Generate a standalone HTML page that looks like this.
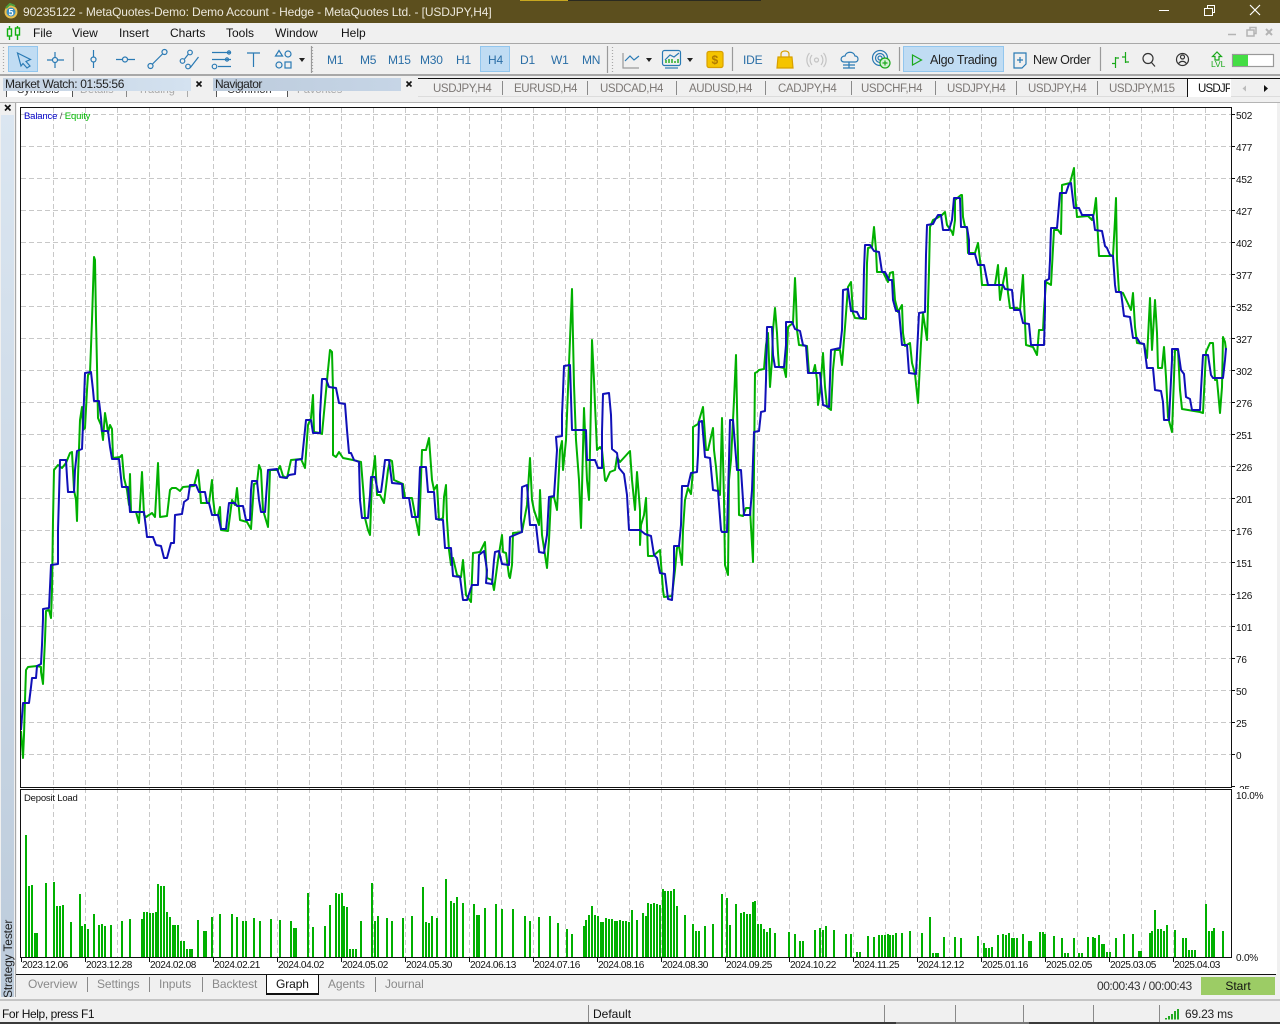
<!DOCTYPE html>
<html><head><meta charset="utf-8"><title>MetaTrader</title>
<style>
html,body{margin:0;padding:0;width:1280px;height:1024px;overflow:hidden;background:#f0f0f0;font-family:"Liberation Sans",sans-serif;}
.a{position:absolute;white-space:nowrap;line-height:14px;}
.m{font-size:12px;color:#111;top:26px;}
.tf{font-size:12px;color:#2a6ea6;top:53px;letter-spacing:-.2px;}
.tb{font-size:11.5px;color:#7d7875;top:82px;letter-spacing:-.38px;}
.s{position:absolute;width:1px;background:#8a8a8a;}
.yl{font-size:10px;color:#111;left:1236px;letter-spacing:-.2px;}
.d{font-size:10px;color:#111;top:959px;letter-spacing:-.42px;}
.bt{font-size:12px;color:#8a8a8a;top:977px;letter-spacing:-.1px;}
.pt{font-size:11px;line-height:12px;color:#aaa;top:84px;}
</style></head><body>
<div style="position:absolute;left:0;top:0;width:1280px;height:23px;background:#5c4f1e"></div>
<div style="position:absolute;left:520px;top:0;width:48px;height:1px;background:#c8a820"></div>
<div style="position:absolute;left:568px;top:0;width:193px;height:1px;background:#2a2a20"></div>
<svg class="a" style="left:3px;top:3px" width="16" height="17"><circle cx="8" cy="9" r="6.5" fill="#e8c050"/><circle cx="8" cy="9" r="4.5" fill="#3f8fc0"/><path d="M3 5L7 1L12 3" stroke="#4ca040" stroke-width="2" fill="none"/><text x="5.5" y="12.5" font-size="9" font-weight="bold" fill="#fff" font-family="Liberation Sans">5</text></svg>
<div class="a" style="left:23px;top:5px;font-size:12px;color:#ece8dc;letter-spacing:-.11px">90235122 - MetaQuotes-Demo: Demo Account - Hedge - MetaQuotes Ltd. - [USDJPY,H4]</div>
<svg class="a" style="left:1150px;top:0" width="130" height="23" fill="none" stroke="#fff"><path d="M9 10.5H19"/><path d="M54.5 8.5H62.5V15.5H54.5ZM57.5 8V5.5H64.5V12.5H62.5"/><path d="M100 5L110 15M110 5L100 15" stroke-width="1.2"/></svg>

<div style="position:absolute;left:0;top:43px;width:1280px;height:1px;background:#a8a8a8"></div>
<svg class="a" style="left:6px;top:25px" width="16" height="16" fill="none" stroke="#10b010" stroke-width="1.4"><path d="M3.5 1V15M11.5 1V15"/><rect x="1.5" y="4" width="4" height="7" fill="#f0f0f0"/><rect x="9.5" y="3" width="4" height="7" fill="#f0f0f0"/></svg>
<div class="a m" style="left:33px">File</div><div class="a m" style="left:72px">View</div><div class="a m" style="left:119px">Insert</div><div class="a m" style="left:170px">Charts</div><div class="a m" style="left:226px">Tools</div><div class="a m" style="left:275px">Window</div><div class="a m" style="left:341px">Help</div>
<svg class="a" style="left:1225px;top:26px" width="55" height="14" fill="none" stroke="#b4b4b4" stroke-width="1.5"><path d="M3 8.5H11"/><path d="M22 4H29V10H22ZM25 3.5V1.5H31V7.5H29"/><path d="M41 3L47 9M47 3L41 9" stroke-width="2"/></svg>

<div style="position:absolute;left:8px;top:46px;width:28px;height:24px;background:#c0dcf3;border:1px solid #92c6ee"></div>
<div style="position:absolute;left:480px;top:46px;width:28px;height:24px;background:#c0dcf3;border:1px solid #92c6ee"></div>
<div style="position:absolute;left:903px;top:46px;width:99px;height:24px;background:#c0dcf3;border:1px solid #92c6ee"></div>
<svg class="a" style="left:0;top:44px" width="1280" height="31" fill="none" stroke="#2a7ab4" stroke-width="1.2">
<g stroke="#a8a8a8" stroke-dasharray="1 2"><path d="M3.5 3V28M312.5 3V28M612.5 3V28"/></g>
<g stroke="#9a9a9a"><path d="M73.5 3V27M311.5 2V29M607.5 2V29M732.5 3V27M899.5 3V27M1100.5 3V27"/></g>
<path d="M17.5 9L30.5 15.5L26 17.5L30 22L27 24L23 19.5L21 22Z"/>
<path d="M47 16H52.5M57.5 16H64M55 8V13.5M55 18.5V24"/><circle cx="55" cy="16" r="2.5"/>
<path d="M93.5 6V13M93.5 18V24"/><circle cx="93.5" cy="15.5" r="2.5"/>
<path d="M116 15.5H122.5M127.5 15.5H135"/><circle cx="125" cy="15.5" r="2.5"/>
<path d="M152.5 20L162.5 10"/><circle cx="150.5" cy="22" r="2.5"/><circle cx="164.5" cy="8" r="2.5"/>
<path d="M184.5 15L188.5 10M190 24L198.5 13"/><circle cx="182.5" cy="17" r="2.3"/><circle cx="190" cy="8.5" r="2.3"/><circle cx="188" cy="22.5" r="2.3"/>
<path d="M212 8.5H231M212 15.5H231M218 22.5H231"/><circle cx="214.5" cy="22.5" r="2.3"/><circle cx="229" cy="8.5" r="1.6"/><circle cx="227" cy="15.5" r="1.6"/>
<path d="M247 9H260M253.5 9V23"/>
<path d="M279 6.5L282.5 12H275.5Z"/><circle cx="288" cy="10" r="3"/><circle cx="279" cy="21" r="3"/><rect x="285" y="18" width="6" height="6"/>
<path d="M299 14H305L302 18Z" fill="#222" stroke="none"/>
<path d="M623 9V24H639" stroke="#9a9a9a"/><path d="M625 17L630 12L634 16L639 12"/>
<path d="M646 14H652L649 18Z" fill="#222" stroke="none"/>
<rect x="662.5" y="6.5" width="18" height="15" rx="2"/><path d="M665 24H678" /><path d="M665 16L670 11L674 13L679 9" stroke="#2a7ab4"/><path d="M666 19V16M669 19V15M672 19V15M675 19V17M678 19V15" stroke="#1aa81a" stroke-width="1.4"/>
<path d="M687 14H693L690 18Z" fill="#222" stroke="none"/>
<rect x="707" y="7.5" width="16" height="16" rx="2" fill="#f5c400" stroke="#d8a000"/>
<path d="M778 13H792L793 24H777Z" fill="#f5c400" stroke="#d8a000"/><path d="M781 13V10C781 6 789 6 789 10V13" stroke="#d8a000"/>
<g stroke="#c4c4c4"><circle cx="816.5" cy="16" r="2"/><path d="M812 11C809.5 14 809.5 18 812 21M821 11C823.5 14 823.5 18 821 21M809.5 9C806 13 806 19 809.5 23M823.5 9C827 13 827 19 823.5 23" /></g>
<path d="M844 18C840 18 840 12 845 12C846 7 854 7 855 12C859 12 859 18 855 18Z"/><path d="M849 18V24M843 24H855M843 21H855"/>
<circle cx="880" cy="14" r="7.5"/><circle cx="880" cy="14" r="4.5"/><circle cx="880" cy="14" r="2"/><circle cx="885" cy="19" r="5" fill="#d4f0d4" stroke="#1aa81a"/><path d="M885 16.5V21.5M882.5 19H887.5" stroke="#1aa81a"/>
<path d="M912.5 11L921.5 16L912.5 21Z" stroke="#1aa81a"/>
<path d="M1014 9H1026V20L1022 24H1014Z" stroke="#2a7ab4"/><path d="M1020 13V19M1017 16H1023"/>
<path d="M1115.5 13V24M1112 19.5H1115.5M1115.5 14H1119M1125.5 8V19M1122 13H1125.5M1125.5 18H1129" stroke="#1aa81a"/>
<circle cx="1148" cy="14.5" r="5" stroke="#333"/><path d="M1151.5 18.5L1155 22.5" stroke="#333"/>
<circle cx="1182.5" cy="15.5" r="6" stroke="#333"/><circle cx="1182.5" cy="13" r="2" stroke="#333"/><path d="M1178.5 20C1180 16.5 1185 16.5 1186.5 20" stroke="#333"/>
<path d="M1212.5 12.5L1217 8L1221.5 12.5H1219V16H1215V12.5Z" stroke="#1aa81a"/>
<rect x="1232.5" y="10.5" width="41" height="12" fill="#fff" stroke="#999"/><rect x="1233" y="11" width="15" height="11" fill="#44dd44" stroke="none"/>
</svg>
<div class="a tf" style="left:327px">M1</div><div class="a tf" style="left:360px">M5</div><div class="a tf" style="left:388px">M15</div><div class="a tf" style="left:420px">M30</div><div class="a tf" style="left:456px">H1</div><div class="a tf" style="left:488px">H4</div><div class="a tf" style="left:520px">D1</div><div class="a tf" style="left:551px">W1</div><div class="a tf" style="left:582px">MN</div>
<div class="a tf" style="left:743px">IDE</div>
<div class="a" style="left:711.5px;top:53px;font-size:12px;font-weight:bold;color:#b07a00">$</div>
<div class="a" style="left:930px;top:53px;font-size:12.5px;color:#222;letter-spacing:-.27px">Algo Trading</div>
<div class="a" style="left:1033px;top:53px;font-size:12.5px;color:#222;letter-spacing:-.35px">New Order</div>
<div class="a" style="left:1211px;top:60px;font-size:8.5px;line-height:9px;color:#1aa81a;letter-spacing:-.1px">LVL</div>
<div style="position:absolute;left:0;top:74px;width:1280px;height:2px;background:#a8a8a8"></div>

<div style="position:absolute;left:6px;top:91px;width:65px;height:7px;background:#fff;border-right:1px solid #555;border-left:1px solid #555"></div>
<div style="position:absolute;left:126px;top:91px;width:1px;height:6px;background:#888"></div>
<div style="position:absolute;left:187px;top:91px;width:1px;height:6px;background:#aaa"></div>
<div style="position:absolute;left:216px;top:91px;width:70px;height:7px;background:#fff;border-right:1px solid #555;border-left:1px solid #555"></div>
<div class="a pt" style="left:17px;color:#333">Symbols</div><div class="a pt" style="left:80px">Details</div><div class="a pt" style="left:138px">Trading</div>
<div class="a pt" style="left:227px;color:#333">Common</div><div class="a pt" style="left:297px">Favorites</div>
<div style="position:absolute;left:3px;top:78px;width:188px;height:13px;background:linear-gradient(90deg,#c4d2e2,#d4e2f0)"></div>
<div style="position:absolute;left:213px;top:78px;width:188px;height:13px;background:linear-gradient(90deg,#bccbdc,#c6d5e6)"></div>
<div class="a" style="left:5px;top:77px;font-size:12px;color:#222;letter-spacing:-.36px">Market Watch: 01:55:56</div>
<div class="a" style="left:215px;top:77px;font-size:12px;color:#222;letter-spacing:-.5px">Navigator</div>
<svg class="a" style="left:195px;top:80px" width="220" height="8" stroke="#111" stroke-width="1.6"><path d="M1.5 1.5L6.5 6.5M6.5 1.5L1.5 6.5M211.5 1.5L216.5 6.5M216.5 1.5L211.5 6.5"/></svg>
<div style="position:absolute;left:418px;top:96px;width:862px;height:1px;background:#dcdcdc"></div>
<div style="position:absolute;left:418px;top:78px;width:862px;height:1px;background:#111"></div>
<div class="a tb" style="left:433px">USDJPY,H4</div><div class="a tb" style="left:514px">EURUSD,H4</div><div class="a tb" style="left:600px">USDCAD,H4</div><div class="a tb" style="left:689px">AUDUSD,H4</div><div class="a tb" style="left:778px">CADJPY,H4</div><div class="a tb" style="left:861px">USDCHF,H4</div><div class="a tb" style="left:947px">USDJPY,H4</div><div class="a tb" style="left:1028px">USDJPY,H4</div><div class="a tb" style="left:1109px">USDJPY,M15</div>
<div class="s" style="left:502px;top:81px;height:14px"></div><div class="s" style="left:587px;top:81px;height:14px"></div><div class="s" style="left:676px;top:81px;height:14px"></div><div class="s" style="left:765px;top:81px;height:14px"></div><div class="s" style="left:851px;top:81px;height:14px"></div><div class="s" style="left:935px;top:81px;height:14px"></div><div class="s" style="left:1016px;top:81px;height:14px"></div><div class="s" style="left:1097px;top:81px;height:14px"></div>
<div style="position:absolute;left:1187px;top:78px;width:43px;height:18px;background:#fff;border-left:1px solid #111;border-top:1px solid #111;border-bottom:1px solid #111"></div>
<div class="a tb" style="left:1198px;color:#111;width:32px;overflow:hidden;letter-spacing:-.8px">USDJPY,H4</div>
<svg class="a" style="left:1240px;top:84px" width="30" height="9"><path d="M6 1.5V7.5L2.5 4.5Z" fill="#bbb"/><path d="M24 1V8L28 4.5Z" fill="#111"/></svg>

<div style="position:absolute;left:0;top:97px;width:1280px;height:5px;background:#f0f0f0"></div>
<div style="position:absolute;left:0;top:102px;width:1280px;height:1px;background:#b4b4b4"></div>
<div style="position:absolute;left:0;top:103px;width:1280px;height:871px;background:#f0f0f0"></div>
<div style="position:absolute;left:17px;top:103px;width:1260px;height:871px;background:#fff"></div>
<div style="position:absolute;left:1px;top:115px;width:13px;height:882px;background:linear-gradient(180deg,#dbe6f1,#bccbdb)"></div>
<div style="position:absolute;left:15px;top:103px;width:1px;height:894px;background:#a8a8a8"></div>
<svg class="a" style="left:4px;top:104px" width="8" height="8" stroke="#111" stroke-width="1.6"><path d="M1 1L6.5 6.5M6.5 1L1 6.5"/></svg>
<div class="a" style="left:-31px;top:952px;width:78px;font-size:12px;color:#222;transform:rotate(-90deg);letter-spacing:-.15px;text-align:left">Strategy Tester</div>

<svg class="a" style="left:0;top:0" width="1280" height="1024" fill="none">
<g stroke="#c8c8c8" stroke-dasharray="5 3" shape-rendering="crispEdges">
<path d="M21 114.5H1231M21 146.5H1231M21 178.5H1231M21 210.5H1231M21 242.5H1231M21 274.5H1231M21 306.5H1231M21 338.5H1231M21 370.5H1231M21 402.5H1231M21 434.5H1231M21 466.5H1231M21 498.5H1231M21 530.5H1231M21 562.5H1231M21 594.5H1231M21 626.5H1231M21 658.5H1231M21 690.5H1231M21 722.5H1231M21 754.5H1231"/>
<path d="M53.5 108V957M85.5 108V957M117.5 108V957M149.5 108V957M181.5 108V957M213.5 108V957M245.5 108V957M277.5 108V957M309.5 108V957M341.5 108V957M373.5 108V957M405.5 108V957M437.5 108V957M469.5 108V957M501.5 108V957M533.5 108V957M565.5 108V957M597.5 108V957M629.5 108V957M661.5 108V957M693.5 108V957M725.5 108V957M757.5 108V957M789.5 108V957M821.5 108V957M853.5 108V957M885.5 108V957M917.5 108V957M949.5 108V957M981.5 108V957M1013.5 108V957M1045.5 108V957M1077.5 108V957M1109.5 108V957M1141.5 108V957M1173.5 108V957M1205.5 108V957"/>
</g>
<path stroke="#00b000" stroke-width="2" stroke-linejoin="round" d="M21 731L23 758L24 735L25 700L26 670L28 667L37 666L41 667L41 672L43 684L44 661L45 640L46 611L49 610L51 618L52 590L53 520L54 470L58 465L62 468L66 463L70 453L72 452L74 490L76 500L77 521L78 477L80 420L82 407L83 430L85 428L87 390L88 375L90 373L92 320L94 257L95 260L96 320L97 366L98 418L101 425L103 440L105 413L107 425L108 433L110 425L112 429L113 458L120 457L122 455L124 478L127 490L129 505L130 474L131 512L136 512L139 523L142 472L144 515L146 517L152 513L155 517L158 463L160 517L167 516L170 490L172 488L176 488L180 491L183 487L194 486L198 470L200 490L201 503L209 503L212 480L213 498L215 515L218 515L220 507L221 530L228 531L232 500L235 505L237 488L240 520L247 522L251 529L254 484L257 483L259 465L261 470L263 510L268 527L270 470L278 470L280 466L283 476L287 478L291 460L301 459L305 468L308 425L311 418L313 395L314 432L320 433L322 434L328 370L330 350L332 352L333 390L333 420L333 455L336 457L339 452L343 458L353 460L361 462L364 500L365 518L368 530L370 535L372 480L374 465L375 456L377 495L380 495L384 503L388 470L390 460L392 461L394 480L403 484L405 498L412 498L416 520L419 535L422 450L426 450L429 438L432 480L434 490L437 485L439 520L443 518L444 497L446 485L447 520L449 550L451 565L453 558L457 575L461 577L463 560L466 595L471 602L473 553L480 552L485 542L487 578L492 580L494 590L498 560L502 535L503 552L506 553L509 576L510 578L512 565L513 533L522 532L527 505L530 458L532 500L534 510L539 525L540 490L542 535L547 568L549 540L551 497L554 497L557 510L560 450L562 441L563 470L566 440L572 289L574 385L576 440L579 480L581 528L584 408L587 480L589 500L591 400L592 340L594 380L595 405L597 450L600 447L602 450L605 480L606 481L610 472L615 470L617 457L620 462L630 451L632 480L635 510L637 472L640 510L640 545L641 525L644 515L646 498L647 526L648 556L653 556L660 550L663 590L664 597L672 596L675 570L677 548L679 546L682 565L683 530L685 500L688 488L691 494L693 470L693 427L698 424L703 407L706 450L708 450L713 428L714 450L716 467L718 490L720 495L722 418L724 500L725 565L728 575L729 480L731 460L734 400L736 355L737 407L738 453L739 515L743 516L746 508L750 508L751 527L753 562L754 470L755 373L757 372L759 370L764 369L766 345L768 333L770 387L772 360L773 330L775 308L777 333L778 353L779 367L784 368L786 377L788 327L793 323L795 278L796 300L797 330L799 345L807 346L809 373L813 373L815 365L817 380L818 405L820 392L823 353L825 387L827 407L831 410L833 370L835 350L840 350L842 365L845 327L848 287L851 282L853 313L855 318L866 319L867 263L868 248L872 247L874 227L876 250L877 272L883 272L888 282L890 273L893 272L895 300L898 312L902 305L903 333L905 346L910 343L912 363L915 374L918 403L921 343L923 313L924 320L927 340L929 270L930 227L933 220L937 218L942 215L945 212L947 225L952 232L953 235L955 220L955 200L961 195L962 195L963 217L965 227L967 228L968 253L975 253L978 243L980 260L982 285L995 285L998 265L1000 300L1003 283L1006 268L1008 293L1010 308L1017 308L1020 310L1023 275L1024 300L1026 345L1033 347L1037 355L1039 330L1043 330L1044 310L1046 282L1051 285L1054 230L1058 230L1061 234L1062 185L1070 183L1074 168L1075 193L1077 217L1088 216L1092 220L1094 213L1096 198L1098 237L1099 256L1113 256L1115 220L1116 198L1117 260L1119 292L1123 293L1131 310L1133 293L1135 327L1137 343L1144 344L1147 358L1150 298L1152 350L1155 300L1157 333L1158 368L1162 368L1164 347L1166 377L1168 417L1172 432L1175 350L1178 350L1180 390L1182 409L1200 412L1203 413L1206 352L1210 343L1213 343L1215 380L1217 380L1220 413L1222 387L1223 337L1225 342L1226 350"/>
<path stroke="#1010b8" stroke-width="2" stroke-linejoin="round" d="M21 730L23 703L29 703L31 687L32 678L36 678L37 666L41 664L42 645L43 619L43 609L49 608L50 587L51 565L58 564L58 530L59 496L60 460L66 460L67 477L68 492L74 492L75 470L77 451L82 449L84 400L85 373L91 372L93 390L94 401L99 401L101 418L102 431L108 431L110 447L112 459L119 459L121 478L122 487L128 487L130 512L144 512L146 528L147 537L153 537L156 545L161 546L164 558L167 558L171 543L174 543L175 515L182 514L184 502L188 499L190 485L196 485L199 492L205 492L207 503L209 503L212 515L218 515L221 529L226 529L229 503L235 503L237 506L243 506L246 520L250 520L251 490L252 481L257 481L259 500L261 512L265 512L268 470L277 469L280 477L286 478L289 475L295 474L296 460L302 459L305 430L306 420L311 420L313 433L320 433L320 415L322 379L326 379L329 387L336 388L339 403L345 404L347 430L349 453L351 453L354 460L359 462L360 500L362 518L368 518L370 495L371 477L375 477L378 492L381 492L383 477L385 460L389 460L392 483L402 484L403 498L409 498L412 517L418 517L420 467L426 467L428 492L434 492L436 519L443 520L445 548L451 548L453 576L460 577L463 600L467 600L472 585L478 585L479 555L484 551L487 570L486 583L492 584L494 560L495 552L499 551L502 564L509 565L510 537L522 532L521 518L522 487L527 485L530 525L536 525L539 552L544 553L547 535L549 497L554 496L557 450L556 437L562 436L562 415L563 392L564 366L570 365L572 430L586 430L587 460L595 460L598 468L602 468L602 432L603 394L609 393L611 415L612 449L617 453L619 468L624 474L627 495L629 530L640 530L645 534L651 536L654 555L657 558L660 573L665 574L668 599L672 600L674 570L674 546L679 546L681 525L682 486L688 486L691 473L697 472L698 455L699 422L702 421L705 457L710 458L713 490L718 491L721 530L722 532L727 532L729 460L730 420L733 420L737 470L741 470L743 500L744 515L750 515L752 490L754 432L759 431L761 412L765 411L766 380L767 327L772 327L773 355L775 367L784 367L786 345L786 322L792 322L795 329L800 331L803 345L806 346L808 373L820 373L823 405L829 407L831 350L840 348L842 330L843 290L848 289L851 311L857 312L860 318L863 318L864 270L865 245L870 245L874 251L879 252L882 272L885 272L889 280L892 280L893 300L896 311L899 311L902 345L907 345L909 373L916 374L919 313L925 312L926 255L927 225L933 224L935 220L938 215L941 215L943 230L949 230L952 220L954 198L960 198L961 227L967 227L969 240L969 254L975 254L978 265L984 265L988 285L1003 285L1005 289L1012 290L1014 310L1020 310L1023 323L1029 324L1031 345L1044 345L1045 310L1045 281L1049 279L1050 260L1051 228L1057 228L1060 193L1066 193L1069 184L1071 183L1073 200L1074 208L1079 208L1082 215L1093 215L1095 230L1102 231L1105 246L1107 248L1110 255L1113 256L1115 285L1116 292L1121 292L1124 316L1130 317L1133 338L1137 338L1140 343L1144 344L1146 360L1147 368L1153 368L1155 390L1161 391L1163 402L1164 420L1169 420L1172 360L1172 349L1178 349L1181 370L1184 374L1186 397L1190 399L1192 410L1200 410L1201 390L1203 355L1208 355L1211 375L1213 378L1223 378L1225 360L1226 348"/>
<path stroke="#00b000" stroke-width="2" shape-rendering="crispEdges" d="M26 835V957M29 886V957M32 885V957M35 933V957M37 933V957M46 883V957M54 882V957M57 906V957M60 906V957M63 905V957M71 922V957M80 894V957M82 926V957M85 924V957M88 929V957M94 914V957M99 925V957M102 924V957M105 926V957M111 925V957M122 921V957M130 919V957M142 919V957M144 912V957M147 912V957M150 913V957M153 913V957M156 912V957M158 884V957M161 886V957M164 886V957M167 912V957M170 917V957M173 925V957M175 925V957M178 925V957M181 941V957M184 941V957M187 949V957M190 949V957M192 949V957M198 920V957M204 931V957M206 931V957M212 917V957M220 914V957M232 914V957M237 917V957M243 921V957M246 921V957M254 918V957M260 921V957M271 919V957M280 920V957M291 921V957M294 928V957M296 928V957M308 893V957M313 927V957M325 926V957M330 905V957M336 893V957M339 894V957M342 893V957M344 906V957M347 907V957M350 949V957M353 949V957M356 949V957M361 921V957M372 883V957M375 921V957M378 916V957M387 918V957M392 921V957M403 918V957M412 916V957M423 887V957M426 922V957M429 923V957M432 916V957M437 918V957M446 879V957M451 901V957M454 903V957M457 897V957M463 903V957M474 904V957M477 915V957M479 915V957M485 908V957M496 904V957M502 909V957M513 909V957M525 916V957M530 921V957M539 917V957M550 916V957M558 923V957M567 929V957M572 934V957M584 926V957M586 920V957M589 915V957M592 906V957M595 915V957M598 916V957M601 922V957M603 922V957M606 918V957M609 919V957M612 919V957M615 921V957M617 921V957M620 920V957M623 921V957M626 921V957M629 922V957M632 910V957M637 920V957M643 913V957M646 916V957M648 903V957M651 904V957M654 903V957M657 904V957M660 905V957M663 889V957M665 891V957M668 891V957M671 891V957M674 889V957M677 906V957M685 915V957M693 924V957M696 931V957M699 931V957M705 926V957M713 924V957M722 894V957M727 898V957M730 925V957M736 904V957M741 913V957M744 912V957M747 914V957M750 914V957M753 902V957M755 901V957M758 924V957M761 924V957M764 929V957M767 932V957M770 928V957M775 933V957M789 932V957M795 934V957M800 941V957M803 941V957M815 930V957M820 928V957M823 930V957M826 926V957M834 930V957M846 934V957M851 934V957M857 952V957M860 952V957M868 936V957M874 937V957M879 935V957M882 935V957M885 935V957M888 934V957M890 935V957M893 935V957M896 933V957M902 933V957M910 931V957M922 933V957M930 917V957M933 953V957M936 953V957M938 953V957M944 937V957M955 937V957M961 938V957M978 936V957M984 943V957M986 948V957M989 948V957M992 947V957M998 935V957M1003 934V957M1006 935V957M1009 933V957M1012 938V957M1014 938V957M1017 938V957M1023 934V957M1029 941V957M1031 941V957M1040 932V957M1043 932V957M1045 934V957M1054 936V957M1062 938V957M1065 953V957M1068 953V957M1074 938V957M1079 953V957M1082 953V957M1088 937V957M1093 937V957M1095 938V957M1099 935V957M1102 944V957M1104 944V957M1107 952V957M1110 952V957M1116 938V957M1124 934V957M1133 934V957M1139 951V957M1141 951V957M1150 933V957M1152 931V957M1155 910V957M1158 929V957M1161 929V957M1164 931V957M1167 925V957M1175 930V957M1183 938V957M1186 938V957M1189 950V957M1192 950V957M1195 950V957M1206 904V957M1209 931V957M1212 931V957M1214 928V957M1223 931V957"/>
<g stroke="#111" shape-rendering="crispEdges">
<path d="M20.5 107.5H1231.5V787.5H20.5Z"/>
<path d="M20.5 789.5H1231.5V957.5H20.5Z"/>
<path d="M21.5 958V962M85.5 958V962M149.5 958V962M213.5 958V962M277.5 958V962M341.5 958V962M405.5 958V962M469.5 958V962M533.5 958V962M597.5 958V962M661.5 958V962M725.5 958V962M789.5 958V962M853.5 958V962M917.5 958V962M981.5 958V962M1045.5 958V962M1109.5 958V962M1173.5 958V962"/>
<path d="M1232 114.5H1235M1232 146.5H1235M1232 178.5H1235M1232 210.5H1235M1232 242.5H1235M1232 274.5H1235M1232 306.5H1235M1232 338.5H1235M1232 370.5H1235M1232 402.5H1235M1232 434.5H1235M1232 466.5H1235M1232 498.5H1235M1232 530.5H1235M1232 562.5H1235M1232 594.5H1235M1232 626.5H1235M1232 658.5H1235M1232 690.5H1235M1232 722.5H1235M1232 754.5H1235M1232 786.5H1235"/>
</g>
</svg>

<div class="a" style="left:24px;top:110px;font-size:9.5px;letter-spacing:-.15px;color:#0000c8">Balance <span style="color:#555">/</span> <span style="color:#00b800">Equity</span></div>
<div class="a" style="left:24px;top:792px;font-size:9.5px;letter-spacing:-.2px;color:#111">Deposit Load</div>
<div class="a yl" style="top:110px">502</div><div class="a yl" style="top:142px">477</div><div class="a yl" style="top:174px">452</div><div class="a yl" style="top:206px">427</div><div class="a yl" style="top:238px">402</div><div class="a yl" style="top:270px">377</div><div class="a yl" style="top:302px">352</div><div class="a yl" style="top:334px">327</div><div class="a yl" style="top:366px">302</div><div class="a yl" style="top:398px">276</div><div class="a yl" style="top:430px">251</div><div class="a yl" style="top:462px">226</div><div class="a yl" style="top:494px">201</div><div class="a yl" style="top:526px">176</div><div class="a yl" style="top:558px">151</div><div class="a yl" style="top:590px">126</div><div class="a yl" style="top:622px">101</div><div class="a yl" style="top:654px">76</div><div class="a yl" style="top:686px">50</div><div class="a yl" style="top:718px">25</div><div class="a yl" style="top:750px">0</div>
<div class="a yl" style="top:785px;height:4px;overflow:hidden;line-height:12px">-25</div>
<div class="a yl" style="top:790px">10.0%</div><div class="a yl" style="top:952px">0.0%</div>

<div class="a d" style="left:22px">2023.12.06</div><div class="a d" style="left:86px">2023.12.28</div><div class="a d" style="left:150px">2024.02.08</div><div class="a d" style="left:214px">2024.02.21</div><div class="a d" style="left:278px">2024.04.02</div><div class="a d" style="left:342px">2024.05.02</div><div class="a d" style="left:406px">2024.05.30</div><div class="a d" style="left:470px">2024.06.13</div><div class="a d" style="left:534px">2024.07.16</div><div class="a d" style="left:598px">2024.08.16</div><div class="a d" style="left:662px">2024.08.30</div><div class="a d" style="left:726px">2024.09.25</div><div class="a d" style="left:790px">2024.10.22</div><div class="a d" style="left:854px">2024.11.25</div><div class="a d" style="left:918px">2024.12.12</div><div class="a d" style="left:982px">2025.01.16</div><div class="a d" style="left:1046px">2025.02.05</div><div class="a d" style="left:1110px">2025.03.05</div><div class="a d" style="left:1174px">2025.04.03</div>

<div style="position:absolute;left:16px;top:974px;width:1264px;height:23px;background:#f0f0f0"></div>
<div style="position:absolute;left:16px;top:974px;width:1260px;height:1px;background:#111"></div>
<div style="position:absolute;left:266px;top:975px;width:51px;height:18px;background:#fff;border-left:1px solid #111;border-right:1px solid #111;border-bottom:2px solid #111"></div>
<div class="a bt" style="left:28px">Overview</div><div class="a bt" style="left:97px">Settings</div><div class="a bt" style="left:159px">Inputs</div><div class="a bt" style="left:212px">Backtest</div><div class="a bt" style="left:276px;color:#111">Graph</div><div class="a bt" style="left:328px">Agents</div><div class="a bt" style="left:385px">Journal</div>
<div class="s" style="left:87px;top:977px;height:15px"></div><div class="s" style="left:149px;top:977px;height:15px"></div><div class="s" style="left:202px;top:977px;height:15px"></div><div class="s" style="left:375px;top:977px;height:15px"></div>
<div class="a" style="left:1097px;top:979px;font-size:12px;color:#333;letter-spacing:-.46px">00:00:43 / 00:00:43</div>
<div class="a" style="left:1201px;top:977px;width:74px;height:18px;background:#9ccc65;color:#111;font-size:12px;line-height:18px;text-align:center">Start</div>

<div style="position:absolute;left:0;top:999px;width:1280px;height:23px;background:#f0f0f0;border-top:2px solid #c4c4c4;box-sizing:border-box"></div>
<div style="position:absolute;left:0;top:997px;width:1280px;height:2px;background:#f0f0f0"></div>
<div class="a" style="left:2px;top:1007px;font-size:12px;color:#111;letter-spacing:-.4px">For Help, press F1</div>
<div class="a" style="left:593px;top:1007px;font-size:12px;color:#111">Default</div>
<div class="s" style="left:588px;top:1005px;height:17px"></div><div class="s" style="left:884px;top:1005px;height:17px"></div><div class="s" style="left:955px;top:1005px;height:17px"></div><div class="s" style="left:1023px;top:1005px;height:17px"></div><div class="s" style="left:1093px;top:1005px;height:17px"></div><div class="s" style="left:1159px;top:1005px;height:17px"></div>
<svg class="a" style="left:1165px;top:1007px" width="16" height="14" stroke="#22aa22" stroke-width="2" shape-rendering="crispEdges"><path d="M1 12.5V11M4 12.5V9M7 12.5V7M10 12.5V4M13 12.5V2"/></svg>
<div class="a" style="left:1185px;top:1007px;font-size:12px;color:#222;letter-spacing:-.2px">69.23 ms</div>
<div style="position:absolute;left:0;top:1022px;width:1280px;height:2px;background:#3a3a3a"></div>
<div style="position:absolute;left:896px;top:1022px;width:133px;height:2px;background:#777"></div>
</body></html>
